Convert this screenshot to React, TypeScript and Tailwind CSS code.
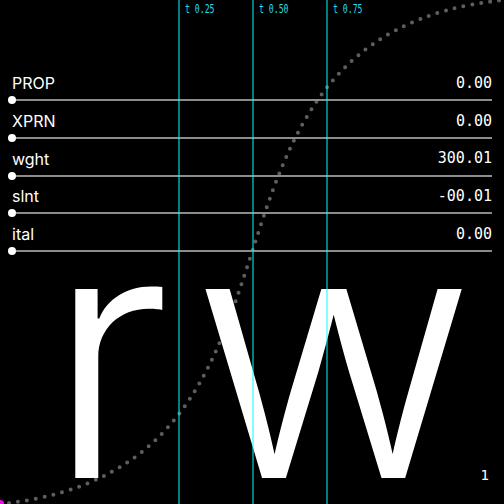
import React from 'react';

const axes = [
  { tag: 'PROP', value: '0.00' },
  { tag: 'XPRN', value: '0.00' },
  { tag: 'wght', value: '300.01' },
  { tag: 'slnt', value: '-00.01' },
  { tag: 'ital', value: '0.00' },
];

// x positions of the easing curve at t = 0.25 / 0.50 / 0.75
const marks = [
  { t: '0.25', x: 178 },
  { t: '0.50', x: 252 },
  { t: '0.75', x: 326 },
];

const sans = { fontFamily: 'Inter, "Noto Sans", sans-serif' };
const mono = { fontFamily: '"DejaVu Sans Mono", "Liberation Mono", monospace' };

const App = () => {
  return (
    <div className="relative w-[504px] h-[504px] bg-black overflow-hidden flex flex-col text-white">
      {/* easing curve behind everything */}
      <svg className="absolute inset-0" width={504} height={504} viewBox="0 0 504 504">
        <path
          d="M0 504 C352.8 468.7 151.2 35.3 504 0"
          fill="none"
          stroke="#5e5e5e"
          strokeWidth={4}
          strokeLinecap="round"
          strokeDasharray="0 9"
        />
        <circle cx={0} cy={504} r={4} fill="#ff00ff" />
      </svg>

      <div className="relative px-3 pt-[72px] flex flex-col" style={sans}>
        {axes.map((axis) => (
          <div key={axis.tag} className="h-[37.75px] flex flex-col">
            <div className="h-[22px] flex items-center justify-between">
              <span className="text-[16px]">{axis.tag}</span>
              <span className="text-[15px]" style={mono}>{axis.value}</span>
            </div>
            <div className="relative mt-[5px] h-[2px] bg-[#8c8c8c]">
              <div className="absolute left-[-4px] top-[-3px] w-[8px] h-[8px] rounded-full bg-white" />
            </div>
          </div>
        ))}
      </div>

      <div className="relative flex-1 min-h-0 flex items-end justify-center mb-[44.5px] pl-[36px]">
        <div className="text-[346px] leading-[0.62] font-light tracking-[19px]" style={sans}>rw</div>
      </div>

      {/* t markers on top */}
      {marks.map((m) => (
        <div key={m.t} className="absolute top-0 bottom-0 w-[2px] bg-[#00ffff]/50" style={{ left: m.x }}>
          <span
            className="absolute left-[7px] top-[3px] inline-block origin-left scale-x-[0.68] text-[12px] leading-none text-[#22dcec] whitespace-nowrap"
            style={mono}
          >
            t 0.{m.t.slice(2)}
          </span>
        </div>
      ))}

      <span className="absolute right-[15px] bottom-[22px] text-[14px] leading-none text-white" style={mono}>
        1
      </span>
    </div>
  );
};

export default App;
